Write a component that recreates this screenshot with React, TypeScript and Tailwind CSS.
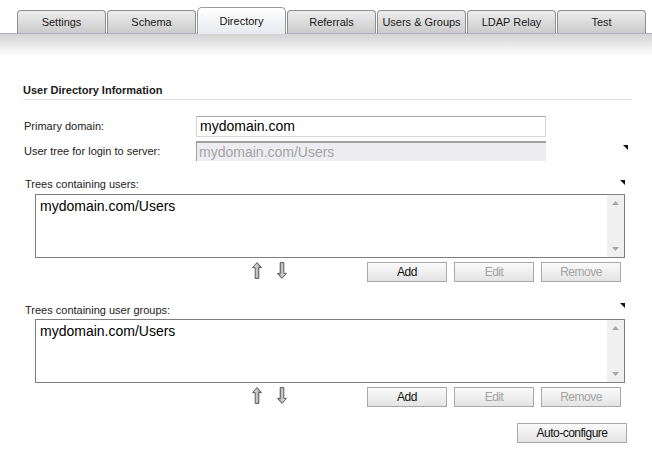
import type { ReactNode } from 'react';

const TABS = ['Settings', 'Schema', 'Directory', 'Referrals', 'Users & Groups', 'LDAP Relay', 'Test'];
const ACTIVE = 'Directory';

const btnBase =
  "h-[20px] border border-[#a9a9a9] bg-gradient-to-b from-[#fbfbfb] to-[#e3e3e3] font-['Liberation_Sans',Arial,sans-serif] text-[12px] tracking-[-0.5px] leading-none";

function Marker({ className }: { className: string }) {
  return (
    <svg width="5" height="5" viewBox="0 0 5 5" className={'absolute ' + className}>
      <polygon points="0,0 5,0 5,5" fill="#111" />
    </svg>
  );
}

function Arrow({ down }: { down?: boolean }) {
  const id = down ? 'gd' : 'gu';
  return (
    <svg width="10" height="17" viewBox="0 0 10 17" className={down ? 'rotate-180' : ''}>
      <defs>
        <linearGradient id={id} x1="0" x2="1" y1="0" y2="0">
          <stop offset="0" stopColor="#f2f2f2" />
          <stop offset="0.5" stopColor="#c4c4c4" />
          <stop offset="1" stopColor="#8a8a8a" />
        </linearGradient>
      </defs>
      <polygon
        points="5,0.6 9.4,5.6 6.8,5.6 6.8,16.4 3.2,16.4 3.2,5.6 0.6,5.6"
        fill={`url(#${id})`}
        stroke="#4a4a4a"
        strokeWidth="0.9"
        strokeLinejoin="round"
      />
    </svg>
  );
}

function ListBox({ children }: { children: ReactNode }) {
  return (
    <div className="ml-[12px] flex h-[64px] w-[590px] border border-[#7f7f7f] bg-white">
      <div className="flex-1 pl-[4px] pt-[3px] font-['Liberation_Sans',Arial,sans-serif] text-[14px] leading-[16px] text-black">
        {children}
      </div>
      <div className="flex w-[17px] flex-col items-center justify-between bg-[#f0f0f0] py-[6px]">
        <svg width="7" height="4" viewBox="0 0 7 4">
          <polygon points="3.5,0 7,4 0,4" fill="#a8a8a8" />
        </svg>
        <svg width="7" height="4" viewBox="0 0 7 4">
          <polygon points="0,0 7,0 3.5,4" fill="#a8a8a8" />
        </svg>
      </div>
    </div>
  );
}

function ListActions() {
  return (
    <div className="mt-[4px] flex w-[598px] items-start">
      <div className="ml-[229px] flex gap-[15px]">
        <Arrow />
        <Arrow down />
      </div>
      <div className="ml-auto flex gap-[7px]">
        <button className={btnBase + ' w-[80px] text-[#111]'}>Add</button>
        <button className={btnBase + ' w-[80px] text-[#a3a3a3]'}>Edit</button>
        <button className={btnBase + ' w-[80px] text-[#a3a3a3]'}>Remove</button>
      </div>
    </div>
  );
}

export default function App() {
  return (
    <div className="relative h-[461px] w-[652px] overflow-hidden bg-white font-['Liberation_Sans',Arial,sans-serif] text-[11px] text-[#222]">
      {/* tab strip */}
      <div className="flex h-[34px] items-end gap-[1px] border-b border-[#adb0c4] pl-[17px]">
        {TABS.map((t) =>
          t === ACTIVE ? (
            <div
              key={t}
              className="-mb-px flex h-[27px] w-[89px] items-center justify-center rounded-t-[5px] border border-b-0 border-[#9a9a9a] bg-gradient-to-b from-white to-[#e7e9ef] pt-[1px] text-[11px] text-[#111]"
            >
              {t}
            </div>
          ) : (
            <div
              key={t}
              className="flex h-[23px] w-[89px] items-center justify-center rounded-t-[4px] border border-b-0 border-[#8e8e8e] bg-gradient-to-b from-[#ededed] to-[#cbcbcb] text-[11px] text-[#1a1a1a]"
            >
              {t}
            </div>
          ),
        )}
      </div>
      <div className="h-[22px] bg-gradient-to-b from-[#d3d3d3] to-white" />

      <div className="relative px-[23px]">
        <div className="mt-[28px] w-[609px] border-b border-[#dedede] pb-[2px] text-[11px] font-bold leading-[13px] text-[#1a1a1a]">
          User Directory Information
        </div>

        <div className="mt-[16px] flex items-center">
          <span className="w-[173px] pl-[1px]">Primary domain:</span>
          <div className="flex h-[21px] w-[350px] items-center border border-[#d6d6d6] border-t-[#a9a9a9] bg-white pl-[3px] text-[14px] text-black">
            mydomain.com
          </div>
        </div>

        <div className="mt-[4px] flex items-center">
          <span className="w-[173px] pl-[1px]">User tree for login to server:</span>
          <div className="flex h-[20px] w-[350px] items-center border-t-2 border-l border-[#a0a0a0] bg-[#ededf1] pl-[2px] text-[14px] text-[#a4a4a4]">
            mydomain.com/Users
          </div>
        </div>

        <div className="mt-[17px] pl-[2px] leading-[13px]">Trees containing users:</div>
        <div className="mt-[3px]">
          <ListBox>mydomain.com/Users</ListBox>
        </div>
        <ListActions />

        <div className="mt-[22px] pl-[2px] leading-[13px]">Trees containing user groups:</div>
        <div className="mt-[2px]">
          <ListBox>mydomain.com/Users</ListBox>
        </div>
        <ListActions />

        <div className="mt-[16px] flex w-[604px] justify-end">
          <button className={btnBase + ' w-[110px] text-[#111]'}>Auto-configure</button>
        </div>
      </div>

      <Marker className="left-[623px] top-[145px]" />
      <Marker className="left-[620px] top-[180px]" />
      <Marker className="left-[620px] top-[303px]" />
    </div>
  );
}
